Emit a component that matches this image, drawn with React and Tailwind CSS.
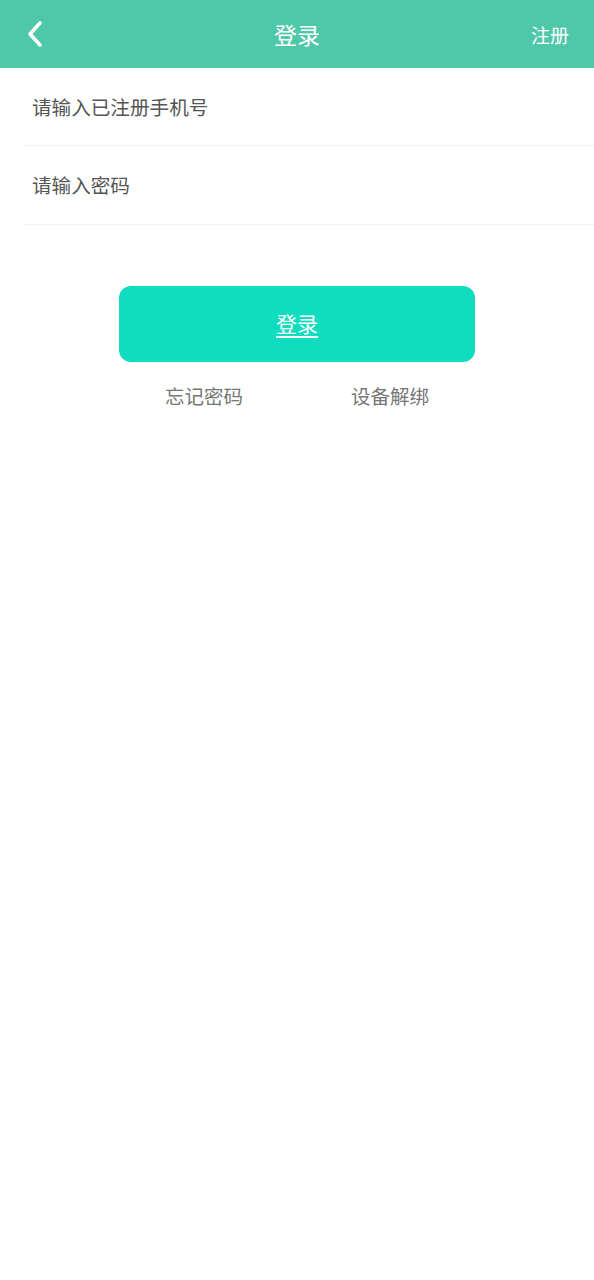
import React from 'react'

export default function App() {
    const font = { fontFamily: '"Noto Sans CJK SC", "Noto Sans", sans-serif' }
    return (
        <div className="min-h-[1280px] bg-white" style={font}>
            <header className="h-[68px] bg-[#4fc8aa] flex items-center justify-between px-[24px] relative">
                <svg width="20" height="28" viewBox="0 0 20 28" className="ml-[1px]">
                    <path d="M15 3 L5 14 L15 25" fill="none" stroke="white" strokeWidth="3.6" strokeLinecap="round" strokeLinejoin="round" />
                </svg>
                <h1 className="absolute left-1/2 -translate-x-1/2 text-white text-[23px] leading-none">登录</h1>
                <button className="text-white text-[19px] leading-none mr-[1px]">注册</button>
            </header>
            <div className="pl-[23px]">
                <div className="h-[78px] flex items-center border-b border-[#f0f0f0] pl-[9px] pt-[1px]">
                    <span className="text-[19.6px] text-[#555] leading-none">请输入已注册手机号</span>
                </div>
                <div className="h-[79px] flex items-center border-b border-[#f4f4f4] pl-[9px]">
                    <span className="text-[19.6px] text-[#555] leading-none">请输入密码</span>
                </div>
            </div>
            <div className="flex flex-col items-center pt-[61px]">
                <button className="w-[356px] h-[76px] rounded-[12px] bg-[#10dcbf] text-white text-[21px] underline underline-offset-[4px]">登录</button>
                <div className="w-[356px] flex justify-between px-[46px] mt-[24px]">
                    <span className="text-[19.5px] text-[#777] leading-none">忘记密码</span>
                    <span className="text-[19.5px] text-[#777] leading-none">设备解绑</span>
                </div>
            </div>
        </div>
    )
}
